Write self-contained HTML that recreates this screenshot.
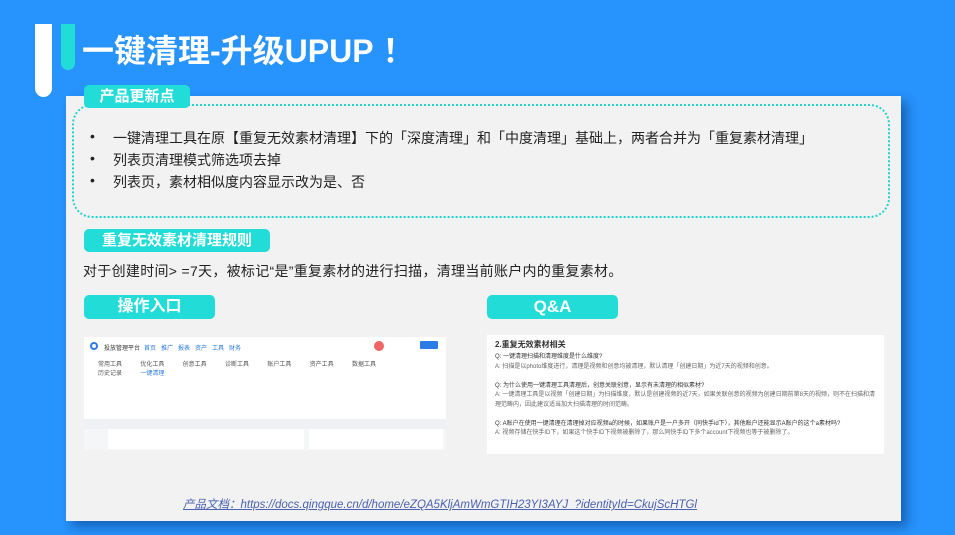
<!DOCTYPE html>
<html><head><meta charset="utf-8"><style>
*{margin:0;padding:0;box-sizing:border-box}
body{width:955px;height:535px;background:#2793fc;position:relative;overflow:hidden;font-family:"Liberation Sans","Noto Sans CJK SC",sans-serif}
.abs{position:absolute}
.panel{left:66px;top:96px;width:835px;height:425px;background:#f2f2f2;box-shadow:6px 6px 10px rgba(0,40,100,.45)}
.tag{position:absolute;background:#22dcd8;color:#fff;font-weight:bold;border-radius:5px;text-align:center}
.dot{left:72px;top:104px;width:818px;height:114px;border:2px dotted #22d2d0;border-radius:20px}
.li{position:absolute;left:90px;font-size:14px;color:#222}
.li span{position:absolute;left:23px;white-space:nowrap}
.sm{font-size:6px;color:#555;white-space:nowrap;position:absolute}
</style></head><body>
<div class="abs" style="left:35px;top:24px;width:17px;height:73px;background:#fff;border-radius:0 0 9px 9px"></div>
<div class="abs" style="left:61px;top:24px;width:14px;height:46px;background:#22dcd8;border-radius:0 0 7px 7px"></div>
<div class="abs" style="left:82px;top:26px;font-size:32px;font-weight:bold;color:#fff;white-space:nowrap">一键清理-升级UPUP&nbsp;！</div>
<div class="abs panel"></div>
<div class="abs dot"></div>
<div class="tag" style="left:84px;top:85px;width:106px;height:23px;font-size:15px;line-height:23px">产品更新点</div>
<div class="li" style="top:128px">•<span>一键清理工具在原【重复无效素材清理】下的「深度清理」和「中度清理」基础上，两者合并为「重复素材清理」</span></div>
<div class="li" style="top:150px">•<span>列表页清理模式筛选项去掉</span></div>
<div class="li" style="top:172px">•<span>列表页，素材相似度内容显示改为是、否</span></div>
<div class="tag" style="left:84px;top:229px;width:186px;height:23px;font-size:15px;line-height:23px">重复无效素材清理规则</div>
<div class="abs" style="left:83px;top:261px;font-size:14px;color:#222;white-space:nowrap;letter-spacing:0.3px">对于创建时间&gt; =7天，被标记“是”重复素材的进行扫描，清理当前账户内的重复素材。</div>
<div class="tag" style="left:84px;top:295px;width:131px;height:24px;font-size:16px;line-height:24px">操作入口</div>
<div class="tag" style="left:487px;top:295px;width:131px;height:24px;font-size:17px;line-height:24px">Q&amp;A</div>
<div class="abs" style="left:84px;top:337px;width:362px;height:113px;background:#f5f6f8">
 <div class="abs" style="left:0;top:0;width:362px;height:82px;background:#fff"></div>
 <div class="abs" style="left:6px;top:5px;width:8px;height:8px;border:2px solid #2a7be8;border-radius:50%"></div>
 <div class="sm" style="left:20px;top:6px;color:#333">投放管理平台</div>
 <div class="sm" style="left:60px;top:6px;color:#2a7be8">首页 &nbsp; 推广 &nbsp; 报表 &nbsp; 资产 &nbsp; 工具 &nbsp; 财务</div>
 <div class="abs" style="left:290px;top:4px;width:10px;height:10px;border-radius:50%;background:#e66"></div>
 <div class="abs" style="left:336px;top:4px;width:18px;height:8px;background:#2a7be8;border-radius:1px"></div>
 <div class="sm" style="left:14px;top:22px">常用工具 &nbsp;&nbsp;&nbsp;&nbsp;&nbsp;&nbsp;&nbsp;&nbsp;&nbsp; 优化工具 &nbsp;&nbsp;&nbsp;&nbsp;&nbsp;&nbsp;&nbsp;&nbsp;&nbsp; 创意工具 &nbsp;&nbsp;&nbsp;&nbsp;&nbsp;&nbsp;&nbsp;&nbsp;&nbsp; 诊断工具 &nbsp;&nbsp;&nbsp;&nbsp;&nbsp;&nbsp;&nbsp;&nbsp;&nbsp; 账户工具 &nbsp;&nbsp;&nbsp;&nbsp;&nbsp;&nbsp;&nbsp;&nbsp;&nbsp; 资产工具 &nbsp;&nbsp;&nbsp;&nbsp;&nbsp;&nbsp;&nbsp;&nbsp;&nbsp; 数据工具</div>
 <div class="sm" style="left:14px;top:31px">历史记录 &nbsp;&nbsp;&nbsp;&nbsp;&nbsp;&nbsp;&nbsp;&nbsp;&nbsp; <span style="color:#2a7be8">一键清理</span></div>
 <div class="abs" style="left:0;top:82px;width:362px;height:10px;background:#f0f1f4"></div>
 <div class="abs" style="left:24px;top:92px;width:196px;height:20px;background:#fff"></div>
 <div class="abs" style="left:225px;top:92px;width:134px;height:20px;background:#fff"></div>
</div>
<div class="abs" style="left:487px;top:335px;width:397px;height:119px;background:#fff;padding:4px 8px;font-size:6px;color:#333;line-height:9.5px">
 <div style="font-size:8px;font-weight:bold;line-height:12px;margin-bottom:2px">2.重复无效素材相关</div>
 <div>Q: 一键清理扫描和清理维度是什么维度?</div>
 <div style="color:#666">A: 扫描是以photo维度进行，清理是视频和创意均被清理，默认清理「创建日期」为近7天的视频和创意。</div><br>
 <div>Q: 为什么使用一键清理工具清理后，创意关联创意，显示有未清理的相似素材?</div>
 <div style="color:#666">A: 一键清理工具是以视频「创建日期」为扫描维度，默认是创建视频的近7天，如果关联创意的视频为创建日期前第8天的视频，则不在扫描和清理范畴内，因此建议适当加大扫描清理的时间范畴。</div><br>
 <div>Q: A账户在使用一键清理在清理掉对应视频a的时候，如果账户是一户多开（同快手id下），其他账户还能显示A账户的这个a素材吗?</div>
 <div style="color:#666">A: 视频存储在快手ID下，如果这个快手ID下视频被删除了，那么同快手ID下多个account下视频也等于被删除了。</div>
</div>
<div class="abs" style="left:183px;top:496px;font-size:11.5px;font-style:italic;color:#4a62b0;text-decoration:underline;white-space:nowrap">产品文档：https://docs.qingque.cn/d/home/eZQA5KljAmWmGTIH23YI3AYJ_?identityId=CkujScHTGl</div>
</body></html>
